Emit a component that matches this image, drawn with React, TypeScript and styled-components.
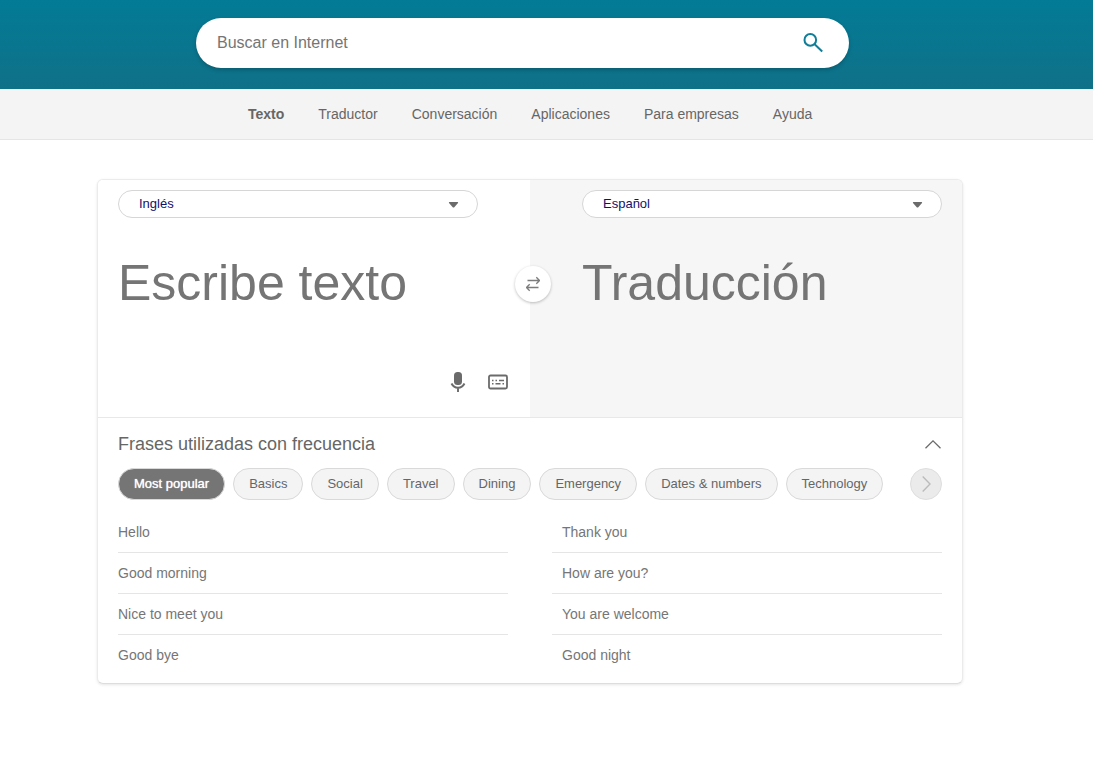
import React from "react";
import styled, { createGlobalStyle } from "styled-components";

const GlobalStyle = createGlobalStyle`
  *, *::before, *::after { box-sizing: border-box; }
  body {
    margin: 0;
    background: #fff;
    color: #666;
    font-family: "Liberation Sans", Arial, sans-serif;
    font-size: 14px;
    line-height: 20px;
  }
  button, input, select, textarea { font-family: inherit; }
  button { cursor: pointer; padding: 0; }
  svg { display: block; }
`;

const Header = styled.header`
  padding: 18px 244px 21px 196px;
  background: linear-gradient(#037b96, #0f7188);
`;

const SearchForm = styled.form`
  display: flex;
  align-items: center;
  height: 50px;
  padding: 0 24px 0 21px;
  border-radius: 25px;
  background: #fff;
  box-shadow: 0 2px 4px rgba(0, 0, 0, 0.2);
`;

const SearchInput = styled.input`
  flex: 1;
  min-width: 0;
  padding: 0;
  border: 0;
  outline: 0;
  background: transparent;
  color: #444;
  font-size: 16px;
  line-height: 20px;
  &::placeholder { color: #757575; opacity: 1; }
`;

const IconButton = styled.button`
  display: grid;
  place-items: center;
  width: 24px;
  height: 24px;
  border: 0;
  background: transparent;
  color: ${(p) => p.color ?? "#6b6b6b"};
`;

const Nav = styled.nav`
  display: flex;
  align-items: center;
  gap: 34px;
  height: 51px;
  padding: 0 20px 0 248px;
  border-bottom: 1px solid #e5e5e5;
  background: #f4f4f4;
`;

const NavLink = styled.a<{ $active?: boolean }>`
  color: #666;
  font-weight: ${(p) => (p.$active ? 700 : 400)};
  text-decoration: none;
  white-space: nowrap;
`;

const Main = styled.main`
  padding: 39px 130px 40px 97px;
`;

const Card = styled.section`
  border: 1px solid #ebebeb;
  border-bottom-color: #ddd;
  border-radius: 6px;
  background: #fff;
  box-shadow: 0 1px 3px rgba(0, 0, 0, 0.1);
`;

const Panes = styled.div`
  position: relative;
  display: grid;
  grid-template-columns: 1fr 1fr;
  border-bottom: 1px solid #e8e8e8;
`;

const Pane = styled.div<{ $target?: boolean }>`
  display: flex;
  flex-direction: column;
  min-width: 0;
  padding: ${(p) => (p.$target ? "10px 20px 23px 52px" : "10px 52px 23px 20px")};
  border-radius: ${(p) => (p.$target ? "0 5px 0 0" : "5px 0 0 0")};
  background: ${(p) => (p.$target ? "#f6f6f6" : "#fff")};
`;

const SelectBox = styled.label`
  display: grid;
  align-items: center;
  & > * { grid-area: 1 / 1; }
  svg { justify-self: end; margin-right: 19px; pointer-events: none; }
`;

const LanguageSelect = styled.select`
  width: 100%;
  height: 28px;
  padding: 0 40px 1px 20px;
  border: 1px solid #d6d6d6;
  border-radius: 14px;
  outline: 0;
  appearance: none;
  background: #fff;
  color: #11116b;
  font-size: 13px;
`;

const TextField = styled.textarea`
  width: 100%;
  height: 101px;
  margin: 35px 0 16px;
  padding: 0;
  border: 0;
  outline: 0;
  resize: none;
  overflow: hidden;
  background: transparent;
  color: #444;
  font-size: 50px;
  line-height: 60px;
  &::placeholder { color: #757575; opacity: 1; }
`;

const Tools = styled.div`
  display: flex;
  justify-content: flex-end;
  gap: 16px;
  margin-right: -32px;
`;

const SwapButton = styled.button`
  position: absolute;
  top: 86px;
  left: calc(50% + 3px);
  display: grid;
  place-items: center;
  width: 36px;
  height: 36px;
  transform: translateX(-50%);
  border: 0;
  border-radius: 50%;
  background: #fff;
  box-shadow: 0 1px 3px rgba(0, 0, 0, 0.25);
  color: #7c7c7c;
`;

const Phrases = styled.div`
  padding: 14px 20px 8px;
`;

const PhrasesHeader = styled.div`
  display: flex;
  align-items: center;
  justify-content: space-between;
`;

const Title = styled.h2`
  margin: 0;
  font-size: 18px;
  font-weight: 400;
  line-height: 24px;
`;

const CollapseButton = styled(IconButton)`
  width: 18px;
`;

const Chips = styled.div`
  display: flex;
  align-items: center;
  gap: 8px;
  margin: 12px 0;
`;

const Chip = styled.button<{ $active?: boolean }>`
  height: 32px;
  padding: 0 15px 1px;
  border: 1px solid #d9d9d9;
  border-radius: 16px;
  background: ${(p) => (p.$active ? "#757575" : "#f4f4f4")};
  color: ${(p) => (p.$active ? "#fff" : "#666")};
  font-size: 13px;
  text-shadow: ${(p) => (p.$active ? "0 0 1px #fff" : "none")};
  white-space: nowrap;
`;

const NextButton = styled.button`
  display: grid;
  flex: none;
  place-items: center;
  width: 32px;
  height: 32px;
  margin-left: auto;
  border: 1px solid #dedede;
  border-radius: 50%;
  background: #ebebeb;
  color: #bbb;
`;

const PhraseColumns = styled.div`
  display: grid;
  grid-template-columns: 1fr 1fr;
  gap: 44px;
`;

const PhraseList = styled.ul<{ $indent?: boolean }>`
  margin: 0;
  padding: 0;
  list-style: none;
  li + li { border-top: 1px solid #e5e5e5; }
  button { padding-left: ${(p) => (p.$indent ? 10 : 0)}px; }
`;

const Phrase = styled.button`
  display: block;
  width: 100%;
  height: 40px;
  border: 0;
  background: transparent;
  color: #767676;
  font-size: 14px;
  line-height: 20px;
  text-align: left;
`;

const links = ["Texto", "Traductor", "Conversación", "Aplicaciones", "Para empresas", "Ayuda"];
const topics = ["Most popular", "Basics", "Social", "Travel", "Dining", "Emergency", "Dates & numbers", "Technology"];
const phraseColumns = [
  ["Hello", "Good morning", "Nice to meet you", "Good bye"],
  ["Thank you", "How are you?", "You are welcome", "Good night"],
];

const SearchIcon = () => (
  <svg width="20" height="20" viewBox="0 0 20 20" fill="none" stroke="currentColor" strokeWidth="2">
    <circle cx="7.300" cy="6.900" r="5.800" />
    <path d="M11.400 11 19.200 18.500" />
  </svg>
);

const CaretIcon = () => (
  <svg width="11" height="8" viewBox="0 0 11 8" fill="#6b6b6b">
    <path d="M1.500 2h8q1 0 .5 1L6.300 7.200q-.8.8-1.600 0L1 3Q.5 2 1.500 2Z" />
  </svg>
);

const MicIcon = () => (
  <svg width="16" height="20" viewBox="0 0 16 20" fill="none" stroke="currentColor" strokeWidth="1.900">
    <rect x="4" y="0" width="8" height="13" rx="3.500" fill="currentColor" stroke="none" />
    <path d="M1.500 11.500C3 14.500 5 15.700 8 15.700s5-1.200 6.500-4.200M8 15.500V20" />
  </svg>
);

const KeyboardIcon = () => (
  <svg width="20" height="16" viewBox="0 0 20 16" fill="none" stroke="currentColor" strokeWidth="1.800">
    <rect x="1" y="1.500" width="18" height="13" rx="1.500" />
    <path d="M4 6.500h1.500M7.500 6.500H9M11 6.500h5M4 9.700h1.500M7.500 9.700h5M14.500 9.700H16" strokeWidth="1.600" />
  </svg>
);

const SwapIcon = () => (
  <svg width="14" height="16" viewBox="0 0 14 16" fill="none" stroke="currentColor" strokeWidth="1.300">
    <path d="M1.500 4.500h12M10.300 1.300l3.200 3.200-3.200 3.200M12.500 11.500H.5M3.700 8.300.5 11.500l3.200 3.200" />
  </svg>
);

const ChevronUpIcon = () => (
  <svg width="16" height="9" viewBox="0 0 16 9" fill="none" stroke="currentColor" strokeWidth="1.300">
    <path d="M.5 8.300 8 .9l7.500 7.400" />
  </svg>
);

const ChevronRightIcon = () => (
  <svg width="9" height="16" viewBox="0 0 9 16" fill="none" stroke="currentColor" strokeWidth="1.400">
    <path d="M.7.5 8 8 .7 15.500" />
  </svg>
);

export default function App() {
  return (
    <>
      <GlobalStyle />
      <Header>
        <SearchForm role="search" onSubmit={(e) => e.preventDefault()}>
          <SearchInput type="text" aria-label="Buscar en Internet" placeholder="Buscar en Internet" />
          <IconButton type="submit" aria-label="Buscar" color="#107e98">
            <SearchIcon />
          </IconButton>
        </SearchForm>
      </Header>
      <Nav>
        {links.map((label, i) => (
          <NavLink key={label} href="#" $active={i === 0}>{label}</NavLink>
        ))}
      </Nav>
      <Main>
        <Card>
          <Panes>
            <Pane>
              <SelectBox>
                <LanguageSelect aria-label="Idioma de origen">
                  <option>Inglés</option>
                </LanguageSelect>
                <CaretIcon />
              </SelectBox>
              <TextField aria-label="Escribe texto" placeholder="Escribe texto" />
              <Tools>
                <IconButton type="button" aria-label="Micrófono"><MicIcon /></IconButton>
                <IconButton type="button" aria-label="Teclado"><KeyboardIcon /></IconButton>
              </Tools>
            </Pane>
            <Pane $target>
              <SelectBox>
                <LanguageSelect aria-label="Idioma de destino">
                  <option>Español</option>
                </LanguageSelect>
                <CaretIcon />
              </SelectBox>
              <TextField aria-label="Traducción" placeholder="Traducción" readOnly />
            </Pane>
            <SwapButton type="button" aria-label="Intercambiar idiomas"><SwapIcon /></SwapButton>
          </Panes>
          <Phrases>
            <PhrasesHeader>
              <Title>Frases utilizadas con frecuencia</Title>
              <CollapseButton type="button" aria-label="Contraer"><ChevronUpIcon /></CollapseButton>
            </PhrasesHeader>
            <Chips>
              {topics.map((label, i) => (
                <Chip key={label} type="button" $active={i === 0}>{label}</Chip>
              ))}
              <NextButton type="button" aria-label="Siguiente"><ChevronRightIcon /></NextButton>
            </Chips>
            <PhraseColumns>
              {phraseColumns.map((phrases, i) => (
                <PhraseList key={i} $indent={i === 1}>
                  {phrases.map((text) => (
                    <li key={text}><Phrase type="button">{text}</Phrase></li>
                  ))}
                </PhraseList>
              ))}
            </PhraseColumns>
          </Phrases>
        </Card>
      </Main>
    </>
  );
}
